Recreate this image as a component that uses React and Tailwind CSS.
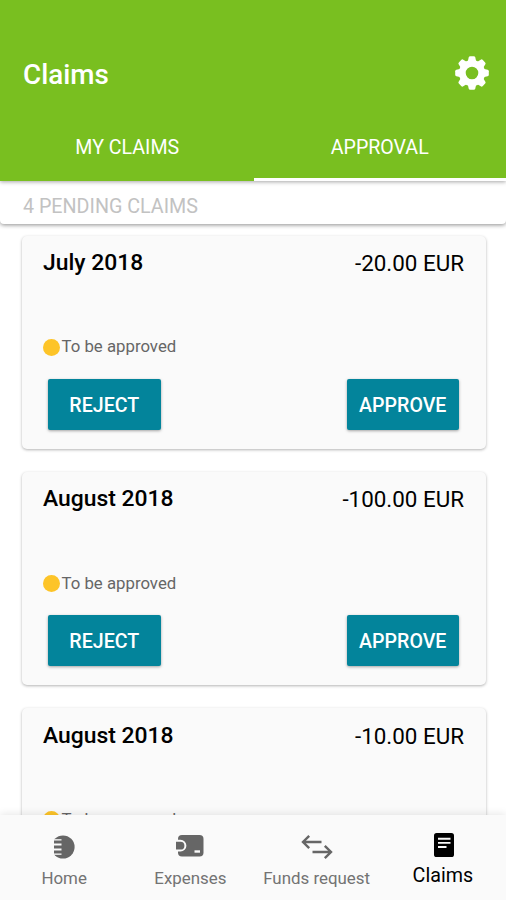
import React, { useState } from 'react'

const claims = [
  { id: 1, month: 'July 2018', amount: '-20.00 EUR' },
  { id: 2, month: 'August 2018', amount: '-100.00 EUR' },
  { id: 3, month: 'August 2018', amount: '-10.00 EUR' },
]

function GearIcon() {
  return (
    <svg viewBox="-17 -17 34 34" className="w-[34px] h-[34px]">
      {[0, 45, 90, 135, 180, 225, 270, 315].map((deg) => (
        <path
          key={deg}
          transform={`rotate(${deg})`}
          d="M-4.6 -10 L-3.3 -15.6 Q-3 -16.8 -1.8 -16.8 H1.8 Q3 -16.8 3.3 -15.6 L4.6 -10 Z"
          fill="#fff"
        />
      ))}
      <circle r="9.7" fill="none" stroke="#fff" strokeWidth="6.8" />
    </svg>
  )
}

function HomeIcon() {
  return (
    <svg viewBox="0 0 24 24" className="w-6 h-6">
      <circle cx="11" cy="12" r="11.6" fill="#666" />
      <path d="M0 4.2H9.5V19.8H0Z" fill="#fafafa" />
      <path d="M2 7H10M2 12H10M2 17H10" stroke="#666" strokeWidth="2.9" />
    </svg>
  )
}

function WalletIcon() {
  return (
    <svg viewBox="0 0 28 24" className="w-7 h-6">
      <rect x="2" y="1" width="25.5" height="21.5" rx="4" fill="#666" />
      <path d="M0 6.2H4.5A5.3 5.3 0 0 1 4.5 16.8H0Z" fill="#666" />
      <path d="M0 6.8H4.5A4.9 4.9 0 0 1 4.5 16.6H0" fill="none" stroke="#fafafa" strokeWidth="2" />
      <rect x="18.5" y="16.3" width="5.5" height="2.4" fill="#fafafa" />
    </svg>
  )
}

function TransferIcon() {
  return (
    <svg viewBox="0 0 32 26" className="w-8 h-[26px]" fill="none" stroke="#666" strokeWidth="2.4">
      <path d="M20.5 8H2.5M8.2 1.8L2 8L8.2 14.2" />
      <path d="M11.5 18H29.5M23.8 11.8L30 18L23.8 24.2" />
    </svg>
  )
}

function ClaimsIcon() {
  return (
    <svg viewBox="0 0 20 24" className="ml-[2px] w-5 h-6">
      <rect width="20" height="24" rx="2.6" fill="#000" />
      <path d="M4 5.8H16.5M4 9.9H16.5M4 14H12.5" stroke="#fafafa" strokeWidth="1.9" />
    </svg>
  )
}

function ClaimCard({ claim }) {
  return (
    <div className="h-[213.4px] shrink-0 rounded-[5px] bg-[#fafafa] pl-[21px] pr-[22px] shadow-[0_1px_3px_rgba(0,0,0,0.3)]">
      <div className="flex justify-between pt-[11.5px] text-[22.4px] leading-[32px] text-black">
        <span className="text-[22.9px] font-medium">{claim.month}</span>
        <span>{claim.amount}</span>
      </div>
      <div className="mt-[56px] flex h-6 items-center text-[16.8px] text-[#666]">
        <span className="mr-[1.5px] h-[17px] w-[17px] rounded-full bg-[#fdc428]"></span>
        <span>To be approved</span>
      </div>
      <div className="mt-[20px] flex justify-between px-[5px]">
        <button className="h-[50.5px] w-[112.5px] rounded-[2px] bg-[#03849b] pt-[3px] text-[19.6px] font-medium text-white shadow-[0_1px_3px_rgba(0,0,0,0.35)]">REJECT</button>
        <button className="h-[50.5px] w-[112.5px] rounded-[2px] bg-[#03849b] pt-[3px] text-[19.6px] font-medium text-white shadow-[0_1px_3px_rgba(0,0,0,0.35)]">APPROVE</button>
      </div>
    </div>
  )
}

function App() {
  const [activeTab, setActiveTab] = useState('approval')

  return (
    <div className="flex h-[900px] w-[506px] flex-col overflow-hidden bg-white font-['Roboto',sans-serif]">
      <header className="z-20 flex h-[180.5px] shrink-0 flex-col bg-[#79bf20] text-white shadow-[0_1px_4px_rgba(0,0,0,0.35)]">
        <div className="flex h-[115px] items-start justify-between pl-[23px] pr-[17px] pt-[56px]">
          <h1 className="text-[27.8px] font-medium leading-[38px]">Claims</h1>
          <GearIcon />
        </div>
        <div className="grid flex-1 grid-cols-2 pl-px text-[19.6px]">
          <button
            onClick={() => setActiveTab('mine')}
            className={activeTab === 'mine' ? 'border-b-[3px] border-white pt-[3px]' : 'border-b-[3px] border-transparent pt-[3px]'}
          >
            MY CLAIMS
          </button>
          <button
            onClick={() => setActiveTab('approval')}
            className={activeTab === 'approval' ? 'border-b-[3px] border-white pt-[3px]' : 'border-b-[3px] border-transparent pt-[3px]'}
          >
            APPROVAL
          </button>
        </div>
      </header>

      <div className="z-10 flex h-[43px] shrink-0 items-center rounded-b-[4px] bg-white pl-[23px] pt-[10px] text-[19.7px] text-[#c2c2c2] shadow-[0_1px_4px_rgba(0,0,0,0.45)]">
        4 PENDING CLAIMS
      </div>

      <main className="flex min-h-0 flex-1 flex-col gap-[23px] overflow-hidden pl-[22px] pr-[20px] pt-[12px]">
        {claims.map((claim) => (
          <ClaimCard key={claim.id} claim={claim} />
        ))}
      </main>

      <nav className="z-10 grid h-[85px] shrink-0 grid-cols-4 bg-[#fafafa] pl-px text-[16.9px] text-[#737373] shadow-[0_-1px_8px_rgba(0,0,0,0.1)]">
        <div className="flex flex-col items-center pt-[20px]">
          <HomeIcon />
          <span className="mt-[7px]">Home</span>
        </div>
        <div className="flex flex-col items-center pt-[19px]">
          <WalletIcon />
          <span className="mt-[8px]">Expenses</span>
        </div>
        <div className="flex flex-col items-center pt-[19px]">
          <TransferIcon />
          <span className="mt-[6px] whitespace-nowrap">Funds request</span>
        </div>
        <div className="flex flex-col items-center pt-[18px] text-[19.7px] text-black">
          <ClaimsIcon />
          <span className="mt-[4px]">Claims</span>
        </div>
      </nav>
    </div>
  )
}

export default App
